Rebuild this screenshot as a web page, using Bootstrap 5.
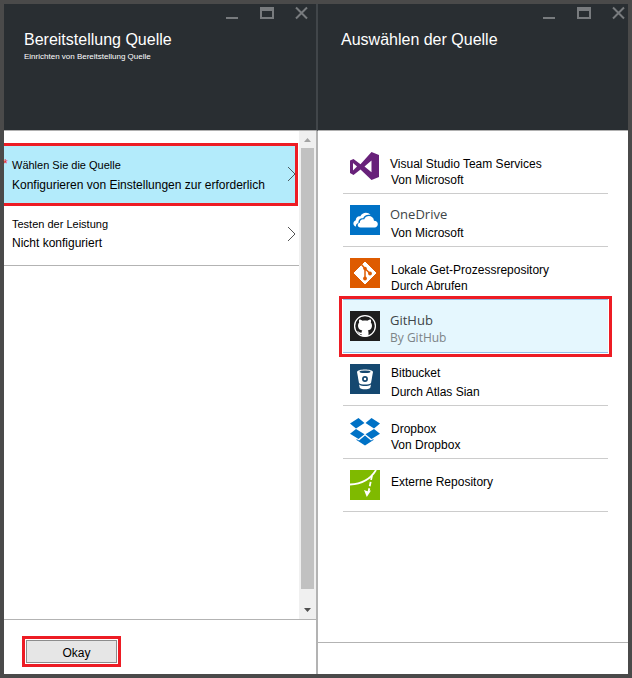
<!DOCTYPE html>
<html lang="de">
<head>
<meta charset="utf-8">
<meta name="viewport" content="width=device-width, initial-scale=1">
<title>Bereitstellung Quelle</title>
<link href="https://cdn.jsdelivr.net/npm/bootstrap@5.3.0/dist/css/bootstrap.min.css" rel="stylesheet">
<style>
  body { font-family: "Liberation Sans", Arial, sans-serif; font-size: 12px; line-height: 16px; color: #000; }
  .shell { border: 4px solid #4a4a4a; }
  .blade { min-width: 0; }
  .blade-a { flex: 314 1 0; }
  .blade-b { flex: 310 1 0; }
  .blade-head { height: 127px; background: #292e32; border-bottom: 1px solid #b0b0b0; }
  .blade-a .blade-head { border-right: 2px solid #41464a; }
  .blade-a .blade-main, .blade-a .blade-foot { border-right: 2px solid #b3b3b3; }
  .blade-a .win-tools { padding-right: 5px; }
  .win-tools { height: 25px; gap: 18px; }
  .win-tools button { width: 17px; height: 18px; padding: 0; border: 0; background: none; }
  .win-tools svg, .source svg, .chevron { display: block; }
  .blade-title { font-size: 16px; line-height: 22px; margin: 0; font-weight: 400; }
  .blade-sub { font-size: 8px; line-height: 12px; margin: 0; }
  .heading-a { padding-left: 20px; }
  .heading-b { padding-left: 23px; }
  .blade-foot { border-top: 1px solid #b3b3b3; }
  .blade-a .blade-foot { height: 55px; padding: 16px 18px; }
  .blade-b .blade-foot { height: 32px; }
  .settings { padding-top: 12px; }
  .setting { border: 0; background: #fff; text-align: left; color: #000; padding: 0 2px 0 8px; }
  .setting-open { background: #b3ebfb; border: 3px solid #ed1c24; border-left: 0; margin-right: 1px; height: 63px; padding-right: 0; }
  .setting-open .setting-value { padding-top: 1px; }
  .setting-plain { height: 60px; border-bottom: 1px solid #b3b3b3; padding-bottom: 4px; }
  .setting-name { font-size: 11px; line-height: 20px; }
  .setting-value { line-height: 19px; }
  .required-star { left: -1px; top: 12px; color: #ed1c24; line-height: 12px; }
  .scroll-track { width: 17px; background: #f0f0f0; }
  .scroll-track button { height: 17px; border: 0; padding: 0; background: none; }
  .scroll-thumb { background: #c1c1c1; margin: 0 2px; }
  .scroll-rest { height: 13px; }
  .ok-ring { border: 3px solid #ed1c24; padding: 1px; }
  .ok-btn { width: 91px; height: 23px; border: 1px solid #8c8c8c; background: #e6e6e6; color: #000; padding: 2px 0 0 10px; line-height: 16px; }
  .sources { padding: 10px 20px 0 25px; }
  .source { height: 53px; border: 0; border-bottom: 1px solid #ccc; background: #fff; text-align: left; color: #000; padding: 11px 7px 0; gap: 10px; }
  .source-text { padding-top: 4px; }
  .source-roomy .source-text { padding-top: 0; }
  .source-roomy .source-name { line-height: 18px; padding-bottom: 2px; }
  .source-inset { padding-left: 1px; }
  .segoe { font-family: "Open Sans", "Noto Sans", sans-serif; font-size: 13px; color: #404548; }
  .segoe-sub { font-family: "Open Sans", "Noto Sans", sans-serif; line-height: 14px; color: #7d8487; }
  .source-picked { background: #e5f7fe; border-bottom-color: #8fbfe8; box-shadow: 0 -1px #8fbfe8; outline: 3px solid #ed1c24; outline-offset: 1px; z-index: 1; }
</style>
<script src="https://cdn.jsdelivr.net/npm/bootstrap@5.3.0/dist/js/bootstrap.bundle.min.js"></script>
</head>
<body>
<div class="shell d-flex min-vh-100">
  <section class="blade blade-a d-flex flex-column">
    <header class="blade-head text-white">
      <div class="win-tools d-flex justify-content-end">
        <button type="button" aria-label="Minimieren"><svg width="17" height="18"><path d="M2 14h12" stroke="#787b7e" stroke-width="2"/></svg></button>
        <button type="button" aria-label="Maximieren"><svg width="17" height="18"><path fill="#787b7e" fill-rule="evenodd" d="M1 3h14v12H1zM3 7v6h10V7z"/></svg></button>
        <button type="button" aria-label="Schließen"><svg width="17" height="18"><path d="M2 3.500l11 11M13 3.500l-11 11" stroke="#787b7e" stroke-width="2"/></svg></button>
      </div>
      <div class="heading-a">
        <h1 class="blade-title">Bereitstellung Quelle</h1>
        <p class="blade-sub">Einrichten von Bereitstellung Quelle</p>
      </div>
    </header>
    <div class="blade-main d-flex flex-grow-1">
      <div class="settings flex-grow-1 d-flex flex-column">
        <button type="button" class="setting setting-open position-relative d-flex align-items-center justify-content-between">
          <span class="required-star position-absolute">*</span>
          <span><span class="setting-name d-block">Wählen Sie die Quelle</span><span class="setting-value d-block">Konfigurieren von Einstellungen zur erforderlich</span></span>
          <svg class="chevron flex-shrink-0" width="8" height="18" fill="none" stroke="#4a5a60"><path d="M1 1l7 7-7 7"/></svg>
        </button>
        <button type="button" class="setting setting-plain d-flex align-items-center justify-content-between">
          <span><span class="setting-name d-block">Testen der Leistung</span><span class="setting-value d-block">Nicht konfiguriert</span></span>
          <svg class="chevron flex-shrink-0" width="10" height="16" fill="none" stroke="#555"><path d="M1 1l7 7-7 7"/></svg>
        </button>
      </div>
      <div class="scroll-track d-flex flex-column flex-shrink-0">
        <button type="button" aria-label="Nach oben"><svg class="d-block" width="17" height="17"><path fill="#a3a3a3" d="M5 11l3.500-4 3.500 4z"/></svg></button>
        <div class="scroll-thumb flex-grow-1"></div>
        <div class="scroll-rest"></div>
        <button type="button" aria-label="Nach unten"><svg class="d-block" width="17" height="17"><path fill="#505050" d="M5 6h7l-3.500 4z"/></svg></button>
      </div>
    </div>
    <footer class="blade-foot d-flex align-items-start">
      <div class="ok-ring"><button type="button" class="ok-btn d-block">Okay</button></div>
    </footer>
  </section>

  <section class="blade blade-b d-flex flex-column">
    <header class="blade-head text-white">
      <div class="win-tools d-flex justify-content-end">
        <button type="button" aria-label="Minimieren"><svg width="17" height="18"><path d="M2 14h12" stroke="#787b7e" stroke-width="2"/></svg></button>
        <button type="button" aria-label="Maximieren"><svg width="17" height="18"><path fill="#787b7e" fill-rule="evenodd" d="M1 3h14v12H1zM3 7v6h10V7z"/></svg></button>
        <button type="button" aria-label="Schließen"><svg width="17" height="18"><path d="M2 3.500l11 11M13 3.500l-11 11" stroke="#787b7e" stroke-width="2"/></svg></button>
      </div>
      <div class="heading-b"><h2 class="blade-title">Auswählen der Quelle</h2></div>
    </header>
    <div class="sources blade-main flex-grow-1 d-flex flex-column">
      <button type="button" class="source d-flex">
        <svg width="30" height="30" viewBox="0 1 30 30"><path fill="#68217a" fill-rule="evenodd" d="M21.500 1L29 4v22l-7.500 3-11-10.500L3.500 24 0 22V9.500L3.500 8l7 5.300zM21.500 9.500L14.500 15.500l7 5.700zM3 12v7.500l4-4z"/></svg>
        <span class="source-text"><span class="source-name d-block">Visual Studio Team Services</span><span class="d-block source-inset">Von Microsoft</span></span>
      </button>
      <button type="button" class="source source-roomy d-flex">
        <svg width="30" height="30" viewBox="0 0 30 30"><path fill="#0072c6" d="M0 0h30v30H0z"/><path fill="#fff" d="M6 21.500c-3-.5-3.800-4.800-.2-6.300-.2-2.700 2.200-4.500 4.600-3.900C12 7.300 18 6.500 20.500 10c-4-.8-6.200.6-7.300 3.300-3.200-.2-5 2-4.700 4.400-1.800.7-2.800 2-2.500 3.800z"/><path fill="#fff" d="M10.500 22.500c-3.500-.3-3.700-4.300-.6-4.800-.3-2.500 2.100-4 4.200-3.300 1.700-4.800 9.300-4.500 9.900 1.300 5 0 5 6.500.6 6.800z"/></svg>
        <span class="source-text"><span class="source-name segoe d-block">OneDrive</span><span class="d-block source-inset">Von Microsoft</span></span>
      </button>
      <button type="button" class="source d-flex">
        <svg width="30" height="30" viewBox="0 0 30 30"><path fill="#de5b00" d="M0 0h30v30H0z"/><path fill="#fff" d="M15 4l11 11-11 11L4 15z" stroke="#fff" stroke-linejoin="round"/><path d="M11.500 6.500l3.500 4v10M15 10.500l5 5" fill="none" stroke="#de5b00" stroke-width="1.500"/><g fill="#de5b00"><circle cx="15" cy="10.500" r="1.800"/><circle cx="15" cy="20.500" r="1.900"/><circle cx="20" cy="15.500" r="1.900"/></g></svg>
        <span class="source-text source-inset"><span class="source-name d-block">Lokale Get-Prozessrepository</span><span class="d-block">Durch Abrufen</span></span>
      </button>
      <button type="button" class="source source-roomy source-picked position-relative d-flex">
        <svg width="30" height="30" viewBox="0 0 30 30"><path fill="#1e1e1e" d="M0 0h30v30H0z"/><circle cx="15" cy="15" r="10.400" fill="none" stroke="#fff" stroke-width="1.300"/><path fill="#fff" d="M9.300 8.500c1.300 0 2.400.6 3.400 1.300 1.500-.4 3.100-.4 4.600 0 1-.7 2.100-1.300 3.400-1.300.5 1.200.4 2.200.1 3.100 2.300 2.800 1.300 7.400-3 8 .6.700.7 1.400.7 2.400v3c-2.300.8-4.700.8-7 0v-2c-2.200.4-2.700-.7-3.300-1.700l-1.200-1c1.800-.4 2 1.600 4.500 1.400.1-.9.300-1.600.8-2.100-4.300-.6-5.400-5.200-3.100-8-.3-.9-.4-1.900.1-3.100z"/></svg>
        <span class="source-text"><span class="source-name segoe d-block">GitHub</span><span class="segoe-sub d-block">By GitHub</span></span>
      </button>
      <button type="button" class="source source-roomy d-flex">
        <svg width="30" height="30" viewBox="0 0 30 30"><path fill="#154870" d="M0 0h30v30H0z"/><path fill="#fff" d="M7 8c0-3.500 16-3.500 16 0l-2 11c-1.500 2-10.500 2-12 0z"/><ellipse cx="15" cy="7.800" rx="5.500" ry="1.200" fill="#154870"/><circle cx="15" cy="15" r="2.100" fill="#fff" stroke="#154870" stroke-width="1.700"/><path fill="#fff" d="M9 20.500c3 2 9 2 12 0l-.8 3.500c-2 1.800-8.400 1.800-10.400 0z"/></svg>
        <span class="source-text source-inset"><span class="source-name d-block">Bitbucket</span><span class="d-block">Durch Atlas Sian</span></span>
      </button>
      <button type="button" class="source d-flex">
        <svg width="30" height="30" viewBox="0 1 30 30"><path fill="#0072c6" d="M8.500 2l6 5L6 12.500 0 7.500zM21.500 2l8.500 5.500-6 5L15.500 7zM6 13l8.500 5.300-6 4.700L0 17.800zM24 13l6 4.800L21.500 23l-6-4.700zM15 19.500l6 5 2.500-1.500v1L15 29.500 6.500 24v-1L9 24.500z"/></svg>
        <span class="source-text source-inset"><span class="source-name d-block">Dropbox</span><span class="d-block">Von Dropbox</span></span>
      </button>
      <button type="button" class="source d-flex">
        <svg width="30" height="30" viewBox="0 0 30 30"><path fill="#7fba00" d="M0 0h30v30H0z"/><path d="M0 14.500C12 14 20 10 26 0" fill="none" stroke="#fff" stroke-width="1.800"/><path d="M22 5.500L18.500 22" fill="none" stroke="#fff" stroke-width="1.800" stroke-dasharray="4.500 2"/><path fill="#fff" d="M14 20l3.500 1.200 3.500-.7-4.200 6.500z"/></svg>
        <span class="source-text source-inset"><span class="source-name d-block">Externe Repository</span></span>
      </button>
    </div>
    <footer class="blade-foot"></footer>
  </section>
</div>
</body>
</html>
